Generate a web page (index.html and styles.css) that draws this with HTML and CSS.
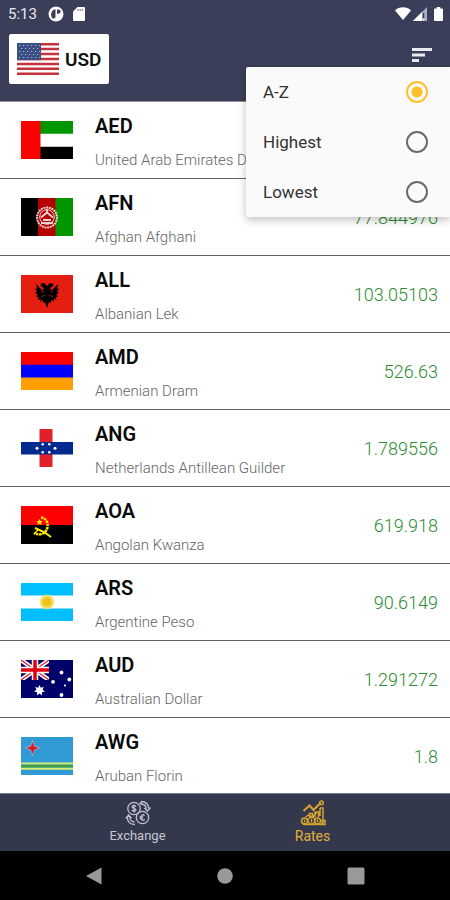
FILE: index.html
```html
<!DOCTYPE html>
<html lang="en">
<head>
<meta charset="utf-8">
<meta name="viewport" content="width=device-width, initial-scale=1">
<title>Rates</title>
<link rel="stylesheet" href="styles.css">
</head>
<body>
<header class="top">
  <div class="status">
    <span class="clock">5:13</span>
    <svg class="status-app" viewBox="0 0 16 16" width="16" height="16"><circle cx="8" cy="8" r="7.5" fill="#fff"/><path d="M7.500 3.200C2 3.200 2 12.500 5.500 12.500c2 0 2-1 2-3z" fill="#3a3e58"/><path d="M9 3.500h1.500a2 2 0 0 1 0 4.200H9z" fill="#3a3e58"/></svg>
    <svg class="status-card" viewBox="0 0 12 14" width="12" height="14"><path d="M4.500 0H11a1 1 0 0 1 1 1v12a1 1 0 0 1-1 1H1a1 1 0 0 1-1-1V4.500z" fill="#fff"/><path d="M5 2v2M7.200 2v2M9.400 2v2" stroke="#8b8e9e" stroke-width="1.200"/></svg>
    <span class="signals">
      <svg viewBox="0 0 16 13" width="16" height="13"><path d="M0 3.500C4-.8 12-.8 16 3.500L8 13z" fill="#fff"/></svg>
      <svg viewBox="0 0 14 14" width="14" height="14"><path d="M14 0v14H0z" fill="#a9acba"/><path d="M9 5v9H0z" fill="#fff"/><path d="M10.500 6v5" stroke="#3a3e58" stroke-width="1.500"/><path d="M10.500 12v1.500" stroke="#fff" stroke-width="1.500"/></svg>
      <svg class="battery" viewBox="0 0 9 14" width="9" height="14"><path d="M2.700 0h3.600v1.500H8a1 1 0 0 1 1 1V13a1 1 0 0 1-1 1H1a1 1 0 0 1-1-1V2.500a1 1 0 0 1 1-1h1.700z" fill="#fff"/></svg>
    </span>
  </div>
  <div class="toolbar">
    <button class="base" type="button">
      <svg viewBox="0 0 42 32" width="42" height="32">
        <path fill="#fff" d="M0 0h42v32H0z"/>
        <path d="M0 1.200h42M0 6.100h42M0 11.100h42M0 16h42M0 20.900h42M0 25.800h42M0 30.800h42" stroke="#c4333d" stroke-width="2.500"/>
        <path fill="#3c4f82" d="M0 0h24v17.200H0z"/>
        <path d="M2 2.500h21M4 5.500h19M2 8.500h21M4 11.500h19M2 14.500h21" stroke="#a9b5d2" stroke-width="1.200" stroke-dasharray="1.200 2.800"/>
      </svg>
      <span>USD</span>
    </button>
    <button class="sort" type="button" aria-label="Sort">
      <svg viewBox="0 0 20 14" width="20" height="14"><path fill="#e9eaf0" d="M0 0h20v3H0zM0 5.500h13v3H0zM0 11h7v3H0z"/></svg>
    </button>
    <div class="menu">
      <label class="option"><span>A-Z</span><input type="radio" name="order" checked></label>
      <label class="option"><span>Highest</span><input type="radio" name="order"></label>
      <label class="option"><span>Lowest</span><input type="radio" name="order"></label>
    </div>
  </div>
</header>
<main class="list-wrap">
<ul class="list">
  <li class="row">
    <svg class="flag" viewBox="0 0 52 38"><path fill="#fff" d="M0 0h52v38H0z"/><path fill="#009600" d="M19 0h33v12.700H19z"/><path d="M19 25.700h33V38H19z"/><path fill="#f00" d="M0 0h19.500v38H0z"/></svg>
    <div class="names"><strong>AED</strong><span>United Arab Emirates Dirham</span></div><data class="rate" value="3.6732">3.6732</data>
  </li>
  <li class="row">
    <svg class="flag" viewBox="0 0 52 38"><path d="M0 0h18v38H0z"/><path fill="#b80000" d="M17 0h18v38H17z"/><path fill="#009600" d="M34.500 0H52v38H34.500z"/><g fill="none" stroke="#ecd5d0"><circle cx="26" cy="19.500" r="10" stroke-width="2" stroke-dasharray="2 .7"/><circle cx="26" cy="19" r="7.300" stroke-width="1"/><path d="M20 19.500l6-5 6 5M22 22h8M20 25h12M26 14v-3" stroke-width="1.800"/></g></svg>
    <div class="names"><strong>AFN</strong><span>Afghan Afghani</span></div><data class="rate" value="77.844976">77.844976</data>
  </li>
  <li class="row">
    <svg class="flag" viewBox="0 0 52 38"><path fill="#e41e10" d="M0 0h52v38H0z"/><path d="M26 11l-3-3-4 1 2 1-2 1 3 1 1 3-3-1-5-5 1 5-2-1 2 4-2 0 3 3-2 1 3 2-2 2 4-1-1 3 3-2 0 3 2-1 2 6 2-6 2 1 0-3 3 2-1-3 4 1-2-2 3-2-2-1 3-3-2 0 2-4-2 1 1-5-5 5-3 1 1-3 3-1-2-1 2-1-4-1z"/><path d="M20 14l2 4M32 14l-2 4M20 22l4-2M32 22l-4-2" stroke="#e41e10" stroke-width=".7"/></svg>
    <div class="names"><strong>ALL</strong><span>Albanian Lek</span></div><data class="rate" value="103.05103">103.05103</data>
  </li>
  <li class="row">
    <svg class="flag" viewBox="0 0 52 38"><path fill="#f00" d="M0 0h52v13H0z"/><path fill="#00f" d="M0 12.700h52V26H0z"/><path fill="#ffa000" d="M0 25.500h52V38H0z"/></svg>
    <div class="names"><strong>AMD</strong><span>Armenian Dram</span></div><data class="rate" value="526.63">526.63</data>
  </li>
  <li class="row">
    <svg class="flag" viewBox="0 0 52 38"><path fill="#fff" d="M0 0h52v38H0z"/><path fill="#e0202a" d="M18.500 0h13v38h-13z"/><path fill="#002a8f" d="M0 13h52v12.500H0z"/><g fill="#fff"><circle cx="16" cy="19.300" r="1.500"/><circle cx="34" cy="19.300" r="1.500"/><circle cx="21.700" cy="15.300" r="1.300"/><circle cx="28.300" cy="15.300" r="1.300"/><circle cx="21.700" cy="23.300" r="1.300"/><circle cx="28.300" cy="23.300" r="1.300"/></g></svg>
    <div class="names"><strong>ANG</strong><span>Netherlands Antillean Guilder</span></div><data class="rate" value="1.789556">1.789556</data>
  </li>
  <li class="row">
    <svg class="flag" viewBox="0 0 52 38"><path fill="#f00" d="M0 0h52v19H0z"/><path d="M0 19h52v19H0z"/><g fill="none" stroke="#ffec00"><path d="M20 11.500c8 1 9 12 2 16-3 1.500-6 1-9-.5" stroke-width="2.500" stroke-dasharray="2.500 .7"/><path d="M14 22l9 4 7 5" stroke-width="2"/><path d="M13 28l4-4" stroke-width="1.500"/></g><path fill="#ffec00" d="M18.500 13l1 2 2.300.2-1.700 1.500.5 2.300-2.100-1.200-2 1.200.5-2.300-1.700-1.500 2.200-.2z"/></svg>
    <div class="names"><strong>AOA</strong><span>Angolan Kwanza</span></div><data class="rate" value="619.918">619.918</data>
  </li>
  <li class="row">
    <svg class="flag" viewBox="0 0 52 38"><path fill="#00bfff" d="M0 0h52v38H0z"/><path fill="#fff" d="M0 12.500h52v13H0z"/><circle cx="26" cy="19" r="7" fill="#f5dc62" stroke="#f8e898" stroke-dasharray="1 1"/><circle cx="26" cy="19" r="4.500" fill="#ecc51c"/></svg>
    <div class="names"><strong>ARS</strong><span>Argentine Peso</span></div><data class="rate" value="90.6149">90.6149</data>
  </li>
  <li class="row">
    <svg class="flag" viewBox="0 0 52 38"><path fill="#00006b" d="M0 0h52v38H0z"/><svg width="28" height="20" viewBox="0 0 28 20"><path d="M0 0l28 20M28 0L0 20" stroke="#fff" stroke-width="4.500"/><path d="M0 0l28 20M28 0L0 20" stroke="#e2202a" stroke-width="1.300"/><path d="M14 0v20M0 10h28" stroke="#fff" stroke-width="6.500"/><path d="M14 0v20M0 10h28" stroke="#e2000f" stroke-width="3.500"/></svg><path fill="#fff" d="M18.500 25l1.300 2.700 3-.7-1.300 2.700 2.400 1.900-3 .7v3.100l-2.400-2-2.400 2v-3.100l-3-.7 2.400-1.900-1.300-2.700 3 .7z"/><g fill="#fff"><circle cx="40.500" cy="12.500" r="1.900"/><circle cx="32" cy="21.800" r="1.900"/><circle cx="48.300" cy="19.500" r="1.900"/><circle cx="44" cy="25.500" r="1.100"/><circle cx="40.500" cy="35" r="1.900"/></g></svg>
    <div class="names"><strong>AUD</strong><span>Australian Dollar</span></div><data class="rate" value="1.291272">1.291272</data>
  </li>
  <li class="row">
    <svg class="flag" viewBox="0 0 52 38"><path fill="#3199d3" d="M0 0h52v38H0z"/><path d="M0 26.500h52M0 31.700h52" stroke="#d5f072" stroke-width="2.200"/><path d="M0 29.100h52" stroke="#3f9d45" stroke-width="2.600"/><path d="M11.500 2l2 6.500L20 11l-6.500 2-2 6.500-2-6.500L3 11l6.500-2.500z" fill="#a9a5bd"/><path d="M11.500 5l1.500 4.500 4.500 1.500-4.500 1.500-1.500 4.500-1.500-4.500L5.500 11 10 9.500z" fill="#e20e22"/></svg>
    <div class="names"><strong>AWG</strong><span>Aruban Florin</span></div><data class="rate" value="1.8">1.8</data>
  </li>
</ul>
</main>
<nav class="tabs">
  <a class="tab" href="#exchange">
    <svg viewBox="0 0 26 26" width="26" height="26" fill="none" stroke="#bfc1cf" stroke-width="1.300"><circle cx="9" cy="8.500" r="6.200"/><circle cx="17.500" cy="17.500" r="6.200"/><path d="M11 6.500c-1-1.300-4-1.200-4 .3 0 2 4 1.200 4 3.200 0 1.600-3 1.600-4.200.2M9 4.500v8M19.500 15.500c-1.500-1.500-3.500-.5-3.500 2s2 3.500 3.700 2M14.700 16.800h3.500M14.700 18.500h3"/><path d="M16 1.500c5 .2 7.500 3 7.800 7M16.500 4c2.800.3 4.500 2 4.800 4.800M16 1.500V4l-1.500-1M25.500 7.500L22.500 11l-3-3M10 24.500c-5-.2-7.500-3-7.800-7M9.500 22c-2.800-.3-4.500-2-4.800-4.800M.8 18.500L3.500 15l3 3"/></svg>
    <span>Exchange</span>
  </a>
  <a class="tab current" href="#rates" aria-current="page">
    <svg viewBox="0 0 26 26" width="26" height="26" fill="none" stroke="#d5a332" stroke-width="1.500"><path d="M3.500 11l6-5.500 4 4.500 7-7" stroke-width="2.200"/><circle cx="21.500" cy="2.800" r="1.800"/><path d="M20 8h3v16M20 8v8M15 17v-5h3.500v5M9.500 17v-3.500h3V17M5.500 17l3-2 4 2 4-4"/><circle cx="4.500" cy="21" r="3"/><circle cx="11.500" cy="20.500" r="3.500"/><circle cx="17.500" cy="21" r="3"/><path d="M3 24.500h22v-4h-4M22 22v2.500M11.500 18.500v4M4.500 19.500v3M17.500 19.500v3"/></svg>
    <span>Rates</span>
  </a>
</nav>
<footer class="system">
  <button type="button" aria-label="Back"><svg viewBox="0 0 18 18" width="18" height="18"><path d="M16.500.5v17L1 9z" fill="#999"/></svg></button>
  <button type="button" aria-label="Home"><svg viewBox="0 0 18 18" width="18" height="18"><circle cx="9" cy="9" r="7.800" fill="#999"/></svg></button>
  <button type="button" aria-label="Recent apps"><svg viewBox="0 0 18 18" width="18" height="18"><rect x=".5" y=".5" width="17" height="17" rx="1.500" fill="#999"/></svg></button>
</footer>
</body>
</html>
```
FILE: styles.css
```css
* { box-sizing: border-box; }

body {
  margin: 0;
  height: 100vh;
  display: flex;
  flex-direction: column;
  background: #fff;
  color: #0a0a0a;
  font-family: Roboto, "Liberation Sans", sans-serif;
}

button {
  border: 0;
  padding: 0;
  background: none;
  font: inherit;
  color: inherit;
}

svg { display: block; flex: none; }

.top {
  background: #3a3e58;
  border-bottom: 1px solid #8e909c;
}

.status {
  display: flex;
  align-items: center;
  height: 27px;
  padding: 0 7px 0 8px;
  color: #e9eaf0;
  font-size: 15px;
}

.clock { width: 40px; }
.status-card { margin-left: 9px; }

.signals {
  display: flex;
  align-items: center;
  gap: 2px;
  margin-left: auto;
}

.battery { margin-left: 5px; }

.toolbar {
  position: relative;
  display: flex;
  justify-content: space-between;
  align-items: flex-start;
  padding: 7px 18px 17px 9px;
}

.base {
  display: flex;
  align-items: center;
  gap: 6px;
  height: 50px;
  padding: 0 8px;
  border-radius: 2px;
  background: #fff;
  color: #111;
  font-size: 19px;
  font-weight: 600;
}

.sort { padding: 14px 0; }

.menu {
  position: absolute;
  z-index: 1;
  top: 40px;
  right: 0;
  width: 204px;
  border-radius: 2px 0 0 2px;
  background: #fafafa;
  box-shadow: 0 3px 9px rgba(0, 0, 0, 0.25);
}

.option {
  display: flex;
  align-items: center;
  justify-content: space-between;
  height: 50px;
  padding: 0 22px 0 17px;
  color: #333;
  font-size: 17px;
}

.option input {
  appearance: none;
  width: 22px;
  height: 22px;
  margin: 0;
  border: 2px solid #6b6b6b;
  border-radius: 50%;
}

.option input:checked {
  border-color: #fbc02d;
  background: radial-gradient(circle, #fbc02d 5px, transparent 6px);
}

.list-wrap {
  flex: 1;
  min-height: 0;
  overflow: hidden;
}

.list {
  margin: 0;
  padding: 0;
  list-style: none;
}

.row {
  display: flex;
  align-items: center;
  height: 77px;
  padding: 0 12px 0 21px;
  border-bottom: 1px solid #626262;
}

.flag { width: 52px; height: 38px; }

.names {
  display: flex;
  flex: 1;
  flex-direction: column;
  gap: 12px;
  margin-left: 22px;
  padding-top: 4px;
}

.names strong {
  font-size: 20px;
  font-weight: 600;
  line-height: 24px;
}

.names span {
  color: #666;
  font-size: 15px;
  font-weight: 300;
  line-height: 20px;
}

.rate {
  color: #2e8b34;
  font-size: 18px;
  font-weight: 300;
}

.tabs {
  display: flex;
  justify-content: center;
  height: 58px;
  padding: 0 50px;
  border-top: 1px solid #777a8c;
  background: #34384c;
}

.tab {
  display: flex;
  flex: 1;
  flex-direction: column;
  align-items: center;
  padding-top: 6px;
  color: #c5c7d3;
  font-size: 13px;
  line-height: 20px;
  text-decoration: none;
}

.current {
  color: #e2b03a;
  font-size: 14px;
}

.system {
  display: flex;
  justify-content: space-around;
  align-items: center;
  height: 49px;
  padding: 0 29px;
  background: #000;
}
```
